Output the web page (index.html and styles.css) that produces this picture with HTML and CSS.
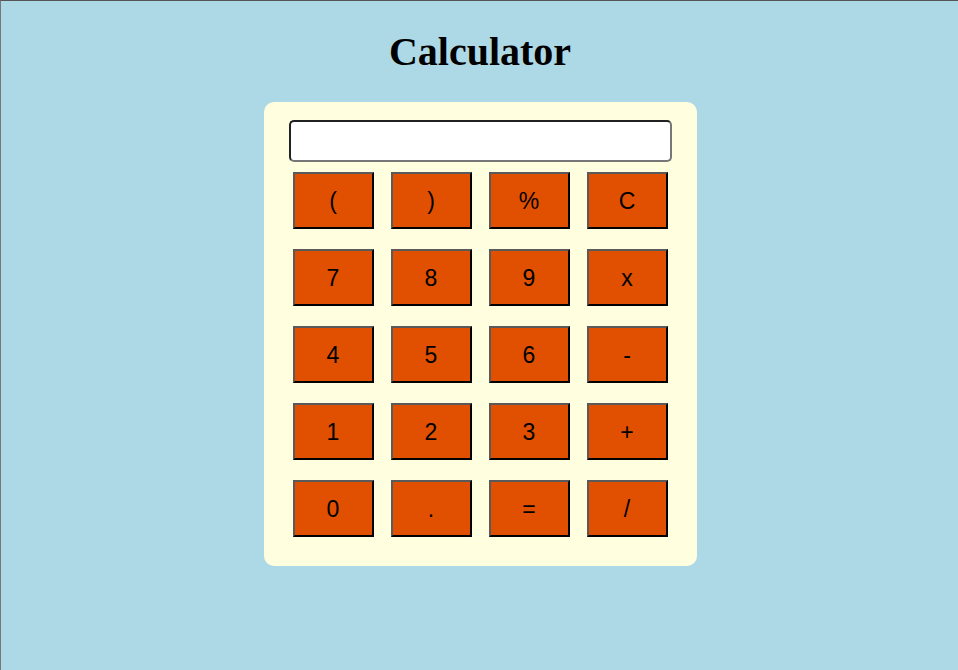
FILE: index.html
```html
<!DOCTYPE html>
<html>
<head>
<meta charset="utf-8">
<title>Calculator</title>
<link rel="stylesheet" href="styles.css">
</head>
<body>
<div class="page">
  <h1 class="title">Calculator</h1>
  <div class="calc">
    <input class="display" type="text">
    <div class="keys">
      <button class="key">(</button>
      <button class="key">)</button>
      <button class="key">%</button>
      <button class="key">C</button>
      <button class="key">7</button>
      <button class="key">8</button>
      <button class="key">9</button>
      <button class="key">x</button>
      <button class="key">4</button>
      <button class="key">5</button>
      <button class="key">6</button>
      <button class="key">-</button>
      <button class="key">1</button>
      <button class="key">2</button>
      <button class="key">3</button>
      <button class="key">+</button>
      <button class="key">0</button>
      <button class="key">.</button>
      <button class="key">=</button>
      <button class="key">/</button>
    </div>
  </div>
</div>
</body>
</html>
```

FILE: styles.css
```css
html, body {
  margin: 0;
  padding: 0;
  height: 100%;
}
body {
  background: #add8e6;
  box-sizing: border-box;
  border-top: 1px solid #555;
  border-left: 1px solid #777;
  font-family: "Liberation Serif", serif;
  overflow: hidden;
}
.page {
  display: flex;
  flex-direction: column;
  align-items: center;
  padding-top: 28px;
  padding-left: 1px;
}
.title {
  margin: 0 0 27px;
  font-size: 40px;
  line-height: 46px;
  font-weight: bold;
  color: #000;
}
.calc {
  width: 433px;
  box-sizing: border-box;
  background: #ffffe0;
  border-radius: 10px;
  padding: 18px 25px 29px;
  display: flex;
  flex-direction: column;
}
.display {
  width: 383px;
  height: 42px;
  box-sizing: border-box;
  margin: 0 0 10px;
  border: 2px solid;
  border-color: #222 #777 #777 #222;
  border-radius: 5px;
  background: #fff;
  font-size: 20px;
  font-family: "Liberation Sans", sans-serif;
  outline: none;
}
.keys {
  display: grid;
  grid-template-columns: repeat(4, 81px);
  grid-auto-rows: 57px;
  column-gap: 17px;
  row-gap: 20px;
  padding: 0 4px;
}
.key {
  box-sizing: border-box;
  margin: 0;
  padding: 2px 0 0;
  background: #e05000;
  border: 2px solid;
  border-color: #5a5a5a #000 #000 #5a5a5a;
  font-family: "Liberation Sans", Arial, sans-serif;
  font-size: 23px;
  color: #000;
}
```
